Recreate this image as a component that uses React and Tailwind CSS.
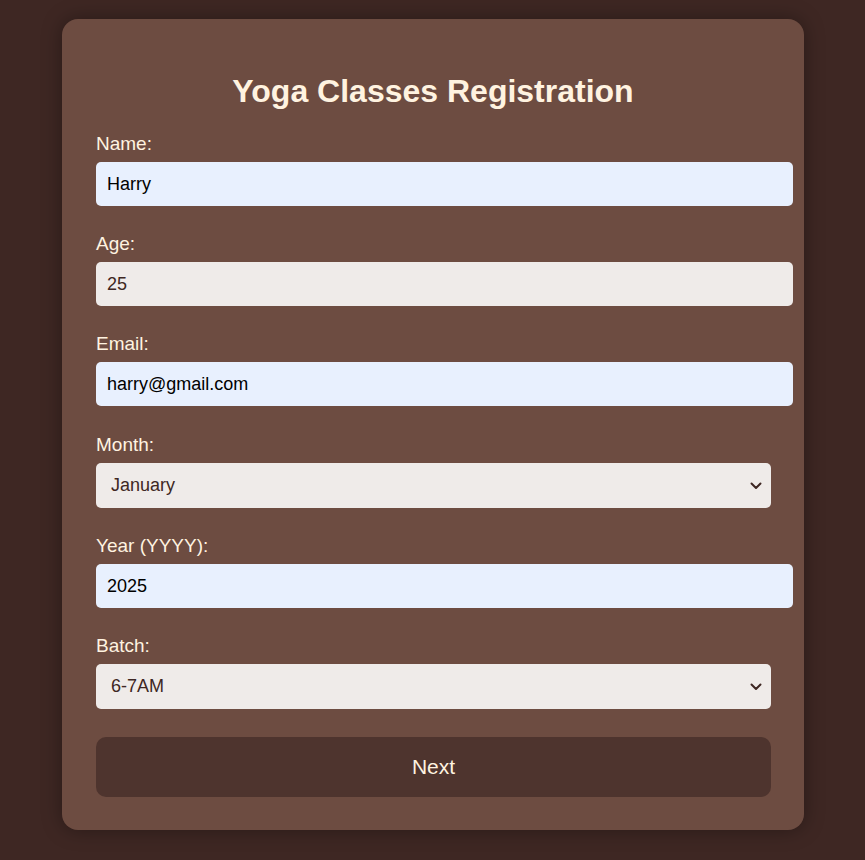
import { useState } from "react";

function Chevron() {
  return (
    <svg
      className="pointer-events-none absolute right-[9px] top-1/2 -translate-y-1/2"
      width="12"
      height="8"
      viewBox="0 0 12 8"
      fill="none"
    >
      <path d="M1.5 1.5 L6 6 L10.5 1.5" stroke="#3e2723" strokeWidth="2" strokeLinecap="round" strokeLinejoin="round" />
    </svg>
  );
}

export default function App() {
  const [form, setForm] = useState({
    name: "Harry",
    age: "25",
    email: "harry@gmail.com",
    month: "January",
    year: "2025",
    batch: "6-7AM",
  });

  const update = (key) => (e) => setForm({ ...form, [key]: e.target.value });

  const labelCls = "block text-[19px] leading-[24px] text-[#fff3e0] mb-[6px]";
  const inputBase =
    "block w-[697px] h-[44px] px-[10px] border border-transparent rounded-[5px] text-[18px] outline-none";
  const selectBase =
    "block w-[675px] h-[45px] pl-[14px] pr-[30px] border border-transparent rounded-[5px] text-[18px] text-[#3e2723] bg-[#efebe9] outline-none appearance-none";

  return (
    <div className="min-h-[860px] bg-[#3e2723] pt-[19px] font-['Liberation_Sans',Arial,sans-serif]">
      <div className="ml-[62px] w-[742px] rounded-[16px] bg-[#6d4c41] px-[34px] pt-[54px] pb-[33px] shadow-[0_0_20px_rgba(0,0,0,0.35)]">
        <h2 className="text-center text-[32px] leading-[37px] font-bold text-[#fff3e0] mb-[22px]">
          Yoga Classes Registration
        </h2>

        <div className="mb-[26px]">
          <label className={labelCls}>Name:</label>
          <input className={`${inputBase} bg-[#e8f0fe] text-black`} value={form.name} onChange={update("name")} />
        </div>

        <div className="mb-[26px]">
          <label className={labelCls}>Age:</label>
          <input className={`${inputBase} bg-[#efebe9] text-[#3e2723]`} value={form.age} onChange={update("age")} />
        </div>

        <div className="mb-[27px]">
          <label className={labelCls}>Email:</label>
          <input className={`${inputBase} bg-[#e8f0fe] text-black`} value={form.email} onChange={update("email")} />
        </div>

        <div className="mb-[26px]">
          <label className={labelCls}>Month:</label>
          <div className="relative w-[675px]">
            <select className={selectBase} value={form.month} onChange={update("month")}>
              {["January", "February", "March", "April", "May", "June", "July", "August", "September", "October", "November", "December"].map((m) => (
                <option key={m}>{m}</option>
              ))}
            </select>
            <Chevron />
          </div>
        </div>

        <div className="mb-[26px]">
          <label className={labelCls}>Year (YYYY):</label>
          <input className={`${inputBase} bg-[#e8f0fe] text-black`} value={form.year} onChange={update("year")} />
        </div>

        <div className="mb-[28px]">
          <label className={labelCls}>Batch:</label>
          <div className="relative w-[675px]">
            <select className={selectBase} value={form.batch} onChange={update("batch")}>
              {["6-7AM", "7-8AM", "8-9AM", "5-6PM"].map((b) => (
                <option key={b}>{b}</option>
              ))}
            </select>
            <Chevron />
          </div>
        </div>

        <button className="block w-[675px] h-[60px] rounded-[10px] bg-[#4e342e] text-[21px] text-[#fff3e0]">
          Next
        </button>
      </div>
    </div>
  );
}
